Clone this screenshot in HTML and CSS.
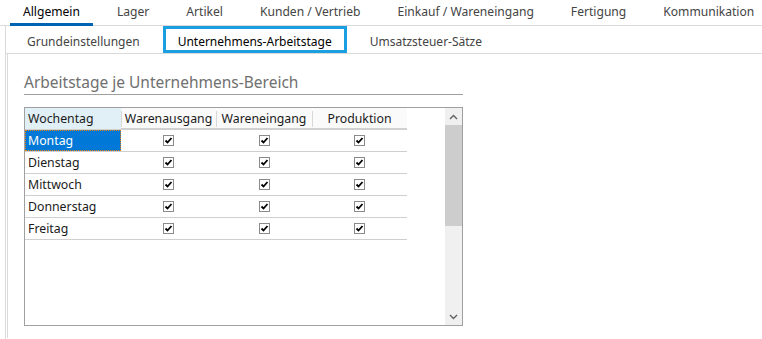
FILE: index.html
```html
<!DOCTYPE html>
<html lang="de">
<head>
    <meta charset="UTF-8">
    <title>Allgemein - Unternehmens-Arbeitstage</title>
    <link rel="stylesheet" href="styles.css">
</head>
<body>
    <div class="tabs">
        <div class="tab active">Allgemein</div>
        <div class="tab">Lager</div>
        <div class="tab">Artikel</div>
        <div class="tab">Kunden / Vertrieb</div>
        <div class="tab">Einkauf / Wareneingang</div>
        <div class="tab">Fertigung</div>
        <div class="tab">Kommunikation</div>
    </div>

    <div class="page">
        <div class="subtabs">
            <div class="subtab">Grundeinstellungen</div>
            <div class="subtab focused">Unternehmens-Arbeitstage</div>
            <div class="subtab">Umsatzsteuer-Sätze</div>
        </div>

        <div class="inner">
            <h2 class="group-title">Arbeitstage je Unternehmens-Bereich</h2>

            <div class="grid">
                <div class="grid-body">
                    <div class="row head">
                        <div class="cell first">Wochentag</div>
                        <div class="cell center">Warenausgang</div>
                        <div class="cell center">Wareneingang</div>
                        <div class="cell center">Produktion</div>
                    </div>
                    <div class="row">
                        <div class="cell first selected">Montag</div>
                        <div class="cell center"><span class="check"></span></div>
                        <div class="cell center"><span class="check"></span></div>
                        <div class="cell center"><span class="check"></span></div>
                    </div>
                    <div class="row">
                        <div class="cell first">Dienstag</div>
                        <div class="cell center"><span class="check"></span></div>
                        <div class="cell center"><span class="check"></span></div>
                        <div class="cell center"><span class="check"></span></div>
                    </div>
                    <div class="row">
                        <div class="cell first">Mittwoch</div>
                        <div class="cell center"><span class="check"></span></div>
                        <div class="cell center"><span class="check"></span></div>
                        <div class="cell center"><span class="check"></span></div>
                    </div>
                    <div class="row">
                        <div class="cell first">Donnerstag</div>
                        <div class="cell center"><span class="check"></span></div>
                        <div class="cell center"><span class="check"></span></div>
                        <div class="cell center"><span class="check"></span></div>
                    </div>
                    <div class="row">
                        <div class="cell first">Freitag</div>
                        <div class="cell center"><span class="check"></span></div>
                        <div class="cell center"><span class="check"></span></div>
                        <div class="cell center"><span class="check"></span></div>
                    </div>
                </div>

                <div class="scrollbar">
                    <div class="arrow">
                        <svg width="9" height="6" viewBox="0 0 9 6"><path d="M1 5 L4.5 1.5 L8 5" fill="none" stroke="#606060" stroke-width="1.4"/></svg>
                    </div>
                    <div class="track"><div class="thumb"></div></div>
                    <div class="arrow">
                        <svg width="9" height="6" viewBox="0 0 9 6"><path d="M1 1 L4.5 4.5 L8 1" fill="none" stroke="#606060" stroke-width="1.4"/></svg>
                    </div>
                </div>
            </div>
        </div>
    </div>

    <script>
        // Häkchen in alle Checkbox-Zellen zeichnen
        document.querySelectorAll('.check').forEach(function(box) {
            box.innerHTML = '<svg width="9" height="9" viewBox="0 0 9 9"><path d="M1.5 4.5 L3.5 6.5 L7.5 2" fill="none" stroke="#000" stroke-width="1.8"/></svg>';
        });
    </script>
</body>
</html>
```

FILE: styles.css
```css
* {
    margin: 0;
    padding: 0;
    box-sizing: border-box;
}

body {
    font-family: "Noto Sans", "Open Sans", sans-serif;
    font-size: 12.3px;
    color: #333;
    background-color: #fff;
    width: 762px;
    height: 339px;
    overflow: hidden;
}

/* Haupt-Reiter */
.tabs {
    display: flex;
    gap: 11px;
    height: 26px;
    padding-left: 10px;
    border-bottom: 1px solid #dadada;
    font-size: 12.1px;
}

.tab {
    position: relative;
    padding: 0 13px;
    line-height: 24px;
    color: #444;
    white-space: nowrap;
}

.tab.active {
    color: #000;
}

.tab.active::after {
    content: "";
    position: absolute;
    left: 0;
    right: 0;
    bottom: -1px;
    height: 3px;
    background-color: #0063b1;
}

/* Seite mit Unter-Reitern */
.page {
    margin-left: 5px;
    border-left: 1px solid #dadada;
    height: 313px;
}

.subtabs {
    display: flex;
    gap: 8px;
    height: 28px;
    padding: 0 0 0 6px;
    border-bottom: 1px solid #dadada;
    font-size: 12px;
}

.subtab {
    padding: 0 12px;
    line-height: 25px;
    color: #444;
    border: 3px solid transparent;
    white-space: nowrap;
}

.subtab.focused {
    color: #000;
    border-color: #1a9fe0;
}

.inner {
    margin-left: 1px;
    border-left: 1px solid #dadada;
    height: 284px;
    padding: 17px 0 0 16px;
}

.group-title {
    width: 439px;
    font-size: 15.5px;
    font-weight: normal;
    color: #707070;
    line-height: 22px;
    padding-bottom: 1px;
    border-bottom: 1px solid #a0a0a0;
    margin-bottom: 12px;
}

/* Tabelle */
.grid {
    display: flex;
    width: 439px;
    height: 219px;
    border: 1px solid #a0a0a0;
}

.grid-body {
    flex: 1;
}

.row {
    display: grid;
    grid-template-columns: 96px 95px 96px 95px;
    height: 22px;
    border-bottom: 1px solid #cfcfcf;
    width: 382px;
}

.row.head {
    height: 22px;
    border-bottom: 2px solid #d0d0d0;
    background-color: #fafafa;
}

.cell {
    line-height: 21px;
    padding-left: 3px;
    color: #1a1a1a;
    white-space: nowrap;
}

.row.head .cell {
    position: relative;
}

.row.head .cell + .cell::before {
    content: "";
    position: absolute;
    left: 0;
    top: 3px;
    bottom: 2px;
    width: 1px;
    background-color: #d8d8d8;
}

.row.head .first {
    background-color: #e1eff6;
}

.row .center {
    display: flex;
    justify-content: center;
    align-items: center;
    padding-left: 0;
}

.cell.selected {
    background-color: #0078d7;
    color: #fff;
    outline: 1px dotted #f08000;
    outline-offset: -1px;
}

.check {
    display: flex;
    justify-content: center;
    align-items: center;
    width: 11px;
    height: 11px;
    border: 1px solid #8a8a8a;
    background-color: #fff;
}

/* Bildlaufleiste */
.scrollbar {
    display: flex;
    flex-direction: column;
    width: 17px;
    background-color: #f0f0f0;
}

.arrow {
    height: 17px;
    display: flex;
    justify-content: center;
    align-items: center;
}

.track {
    flex: 1;
}

.thumb {
    height: 101px;
    background-color: #cdcdcd;
}
```
